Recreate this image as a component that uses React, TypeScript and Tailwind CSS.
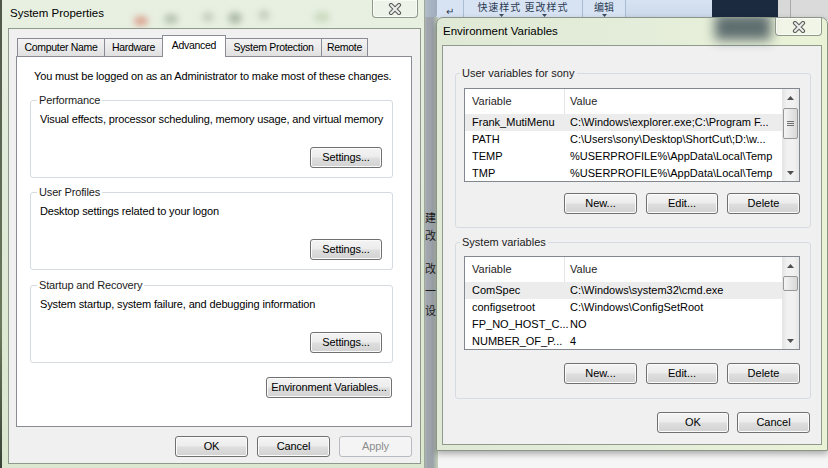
import React from "react";

const T = "text-[11px]";

function Btn({ label, w, disabled }: { label: string; w: string; disabled?: boolean }) {
  const style = disabled
    ? "border-[#b8bcc0] bg-[#f4f4f4] text-[#8d8d8d]"
    : "border-[#707070] bg-[linear-gradient(#f4f4f4,#ececec_48%,#dedede_52%,#d2d2d2)] text-black shadow-[inset_0_0_0_1px_#fbfbfb]";
  return (
    <div className={`flex h-[21px] items-center justify-center rounded-[3px] border leading-none ${T} ${style} ${w}`}>
      {label}
    </div>
  );
}

function Group({
  label,
  labelBg,
  labelLeft,
  className,
  children,
}: {
  label: string;
  labelBg: string;
  labelLeft: string;
  className: string;
  children: React.ReactNode;
}) {
  return (
    <div className={`relative rounded-[3px] border border-[#d5dbe0] ${className}`}>
      <span className={`absolute top-[-9px] px-[2px] leading-[16px] text-[#1b1b1b] ${T} ${labelBg} ${labelLeft}`}>
        {label}
      </span>
      {children}
    </div>
  );
}

function CloseX() {
  return (
    <svg width="14" height="12" viewBox="0 0 14 12">
      <path d="M3 2 L11 10 M11 2 L3 10" stroke="#5b5f5b" strokeWidth="4.2" strokeLinecap="round" />
      <path d="M3 2 L11 10 M11 2 L3 10" stroke="#eef0ee" strokeWidth="2" strokeLinecap="round" />
    </svg>
  );
}

function Caret() {
  return (
    <svg width="5" height="3" viewBox="0 0 5 3">
      <path d="M0 0 L2.5 3 L5 0 Z" fill="#3b4a60" />
    </svg>
  );
}

function ScrollBar({ thumb, grip }: { thumb: string; grip?: boolean }) {
  return (
    <div className="relative h-full w-[17px] shrink-0 bg-[linear-gradient(90deg,#e3e3e3,#f1f1f1_30%,#f1f1f1_70%,#e6e6e6)]">
      <div className="flex h-[17px] items-center justify-center">
        <svg width="7" height="4" viewBox="0 0 7 4">
          <path d="M0 4 L3.5 0 L7 4 Z" fill="#505050" />
        </svg>
      </div>
      <div
        className={`absolute left-[1px] right-[1px] flex items-center justify-center rounded-[2px] border border-[#979797] bg-[linear-gradient(90deg,#f4f4f4,#e6e6e6_50%,#d8d8d8)] ${thumb}`}
      >
        {grip && (
          <svg width="7" height="7" viewBox="0 0 7 7">
            <path d="M0 1.5 H7 M0 3.5 H7 M0 5.5 H7" stroke="#707070" strokeWidth="1" />
          </svg>
        )}
      </div>
      <div className="absolute bottom-0 flex h-[17px] w-full items-center justify-center">
        <svg width="7" height="4" viewBox="0 0 7 4">
          <path d="M0 0 L3.5 4 L7 0 Z" fill="#505050" />
        </svg>
      </div>
    </div>
  );
}

function ListView({ rows, thumb, grip }: { rows: [string, string][]; thumb: string; grip?: boolean }) {
  return (
    <div className="ml-[8px] flex h-[94px] w-[336px] overflow-hidden border border-[#828790] bg-white">
      <div className="min-w-0 flex-1">
        <div className={`flex h-[25px] items-center ${T} text-[#1e1e1e]`}>
          <div className="flex h-full w-[100px] items-center border-r border-[#e3e5e8] pl-[7px]">Variable</div>
          <div className="pl-[5px]">Value</div>
        </div>
        {rows.map((r, i) => (
          <div
            key={i}
            className={`flex h-[17px] items-center whitespace-nowrap ${T} ${i === 0 ? "bg-[#ececec]" : ""}`}
          >
            <div className="w-[100px] shrink-0 pl-[7px]">{r[0]}</div>
            <div className="pl-[5px]">{r[1]}</div>
          </div>
        ))}
      </div>
      <ScrollBar thumb={thumb} grip={grip} />
    </div>
  );
}

const tabs = [
  { label: "Computer Name", w: "w-[88px]" },
  { label: "Hardware", w: "w-[59px]" },
  { label: "Advanced", w: "w-[64px]", sel: true },
  { label: "System Protection", w: "w-[97px]" },
  { label: "Remote", w: "w-[47px]" },
];

function SystemProperties() {
  return (
    <div className="absolute left-[2px] top-0 h-[468px] w-[423px] border-r border-[#9ea99a] bg-[linear-gradient(180deg,#e8f0e2,#e0ead8_40%,#dbe7cf)]">
      <div className="relative h-[28px] overflow-hidden">
        <div className="absolute left-[132px] top-[16px] h-[10px] w-[14px] rounded-full bg-[#d88a78] opacity-70 blur-[3px]" />
        <div className="absolute left-[162px] top-[14px] h-[10px] w-[14px] rounded-full bg-[#9aa892] opacity-60 blur-[3px]" />
        <div className="absolute left-[200px] top-[12px] h-[10px] w-[12px] rounded-full bg-[#b4bca8] opacity-60 blur-[3px]" />
        <div className="absolute left-[226px] top-[12px] h-[12px] w-[14px] rounded-full bg-[#8e9e88] opacity-60 blur-[3px]" />
        <div className="absolute left-[256px] top-[10px] h-[10px] w-[12px] rounded-full bg-[#a6b29e] opacity-50 blur-[3px]" />
        <div className="absolute left-[312px] top-[12px] h-[10px] w-[16px] rounded-full bg-[#bccdab] opacity-60 blur-[3px]" />
        <div className="absolute left-[8px] top-[4px] text-[11.5px] leading-[18px]">System Properties</div>
        <div className="absolute left-[370px] top-0 flex h-[18px] w-[46px] items-center justify-center rounded-b-[4px] border border-t-0 border-[#8e998b] bg-[#f1f5ee]/60 shadow-[inset_0_0_0_1px_rgba(255,255,255,0.6)]">
          <CloseX />
        </div>
      </div>
      <div className="ml-[6px] h-[436px] w-[413px] border border-[#8f9a8c] bg-[#f0f0f0] tracking-[-0.15px]">
        <div className="relative z-10 mt-[6px] flex h-[21px] items-end pl-[8px]">
          {tabs.map((t, i) => (
            <div
              key={t.label}
              className={`flex items-center justify-center border border-b-0 border-[#898c95] text-[10.5px] tracking-[-0.3px] ${t.w} ${
                i > 0 ? "-ml-px" : ""
              } ${
                t.sel
                  ? "relative z-10 -mb-px h-[22px] bg-white pb-[1px]"
                  : "h-[18px] bg-[linear-gradient(#f3f3f3,#ebebeb_50%,#e0e0e0)]"
              }`}
            >
              {t.label}
            </div>
          ))}
        </div>
        <div className="ml-[7px] h-[371px] w-[396px] border border-[#898c95] bg-white">
          <div className={`pl-[17px] pt-[11px] leading-[16px] ${T}`}>
            You must be logged on as an Administrator to make most of these changes.
          </div>
          {[
            { l: "Performance", d: "Visual effects, processor scheduling, memory usage, and virtual memory", mt: "mt-[16px]" },
            { l: "User Profiles", d: "Desktop settings related to your logon", mt: "mt-[14px]" },
            { l: "Startup and Recovery", d: "System startup, system failure, and debugging information", mt: "mt-[15px]" },
          ].map((g) => (
            <Group
              key={g.l}
              label={g.l}
              labelBg="bg-white"
              labelLeft="left-[6px]"
              className={`ml-[13px] h-[78px] w-[363px] ${g.mt}`}
            >
              <div className={`pl-[9px] pt-[10px] leading-[16px] ${T}`}>{g.d}</div>
              <div className="mt-[20px] flex justify-end pr-[10px]">
                <Btn label="Settings..." w="w-[72px]" />
              </div>
            </Group>
          ))}
          <div className="mt-[14px] flex justify-end pr-[19px]">
            <Btn label="Environment Variables..." w="w-[126px]" />
          </div>
        </div>
        <div className="mt-[9px] flex justify-end gap-[9px] pr-[8px]">
          <Btn label="OK" w="w-[73px]" />
          <Btn label="Cancel" w="w-[73px]" />
          <Btn label="Apply" w="w-[73px]" disabled />
        </div>
      </div>
    </div>
  );
}

function EnvVars() {
  const userRows: [string, string][] = [
    ["Frank_MutiMenu", "C:\\Windows\\explorer.exe;C:\\Program F..."],
    ["PATH", "C:\\Users\\sony\\Desktop\\ShortCut\\;D:\\w..."],
    ["TEMP", "%USERPROFILE%\\AppData\\Local\\Temp"],
    ["TMP", "%USERPROFILE%\\AppData\\Local\\Temp"],
  ];
  const sysRows: [string, string][] = [
    ["ComSpec", "C:\\Windows\\system32\\cmd.exe"],
    ["configsetroot", "C:\\Windows\\ConfigSetRoot"],
    ["FP_NO_HOST_C...", "NO"],
    ["NUMBER_OF_P...", "4"],
  ];
  return (
    <div className="absolute left-[436px] top-[17px] h-[434px] w-[392px] overflow-hidden rounded-t-[7px] border border-[#8a9588] bg-[linear-gradient(90deg,#dfe9d5,#e4edda_50%,#eaf2d6)] shadow-[0_3px_6px_rgba(0,0,0,0.3)]">
      <div className="relative h-[27px]">
        <div className="absolute left-[278px] top-[-4px] h-[26px] w-[56px] bg-[#3c4d55] opacity-80 blur-[6px]" />
        <div className="absolute left-[6px] top-[4px] text-[11.5px] leading-[18px]">Environment Variables</div>
        <div className="absolute left-[338px] top-0 flex h-[18px] w-[47px] items-center justify-center rounded-b-[4px] border border-t-0 border-[#8e998b] bg-[#f3f6ee]/70 shadow-[inset_0_0_0_1px_rgba(255,255,255,0.6)]">
          <CloseX />
        </div>
      </div>
      <div className="ml-[5px] h-[400px] w-[380px] border border-[#8f9a8c] bg-[#f0f0f0]">
        <Group
          label="User variables for sony"
          labelBg="bg-[#f0f0f0]"
          labelLeft="left-[4px]"
          className="ml-[12px] mt-[27px] h-[155px] w-[356px]"
        >
          <div className="mt-[14px]">
            <ListView rows={userRows} thumb="top-[19px] h-[31px]" grip />
          </div>
          <div className="mt-[11px] flex justify-end gap-[9px] pr-[10px]">
            <Btn label="New..." w="w-[73px]" />
            <Btn label="Edit..." w="w-[72px]" />
            <Btn label="Delete" w="w-[73px]" />
          </div>
        </Group>
        <Group
          label="System variables"
          labelBg="bg-[#f0f0f0]"
          labelLeft="left-[4px]"
          className="ml-[12px] mt-[14px] h-[157px] w-[356px]"
        >
          <div className="mt-[13px]">
            <ListView rows={sysRows} thumb="top-[19px] h-[15px]" />
          </div>
          <div className="mt-[13px] flex justify-end gap-[9px] pr-[10px]">
            <Btn label="New..." w="w-[73px]" />
            <Btn label="Edit..." w="w-[72px]" />
            <Btn label="Delete" w="w-[73px]" />
          </div>
        </Group>
        <div className="mt-[13px] flex justify-end gap-[8px] pr-[11px]">
          <Btn label="OK" w="w-[72px]" />
          <Btn label="Cancel" w="w-[73px]" />
        </div>
      </div>
    </div>
  );
}

function Backdrop() {
  return (
    <>
      <div className="absolute left-0 top-0 h-full w-[3px] bg-[linear-gradient(180deg,#4e574a,#6b7a5c_70%,#3a4236)]" />
      <div className="absolute left-[420px] top-0 flex h-[20px] w-[408px] bg-[#d7e3f2] font-['Noto_Sans_CJK_SC',sans-serif] text-[#2b3b52]">
        <div className="h-full w-[17px] rounded-br-[6px] bg-[linear-gradient(90deg,#b9c3cf,#9eabbb)]" />
        <div className="flex w-[26px] items-start justify-center pt-[6px] text-[10px] leading-[10px]">↵</div>
        <div className="flex w-[119px] flex-col items-center border-l border-[#a8bcd6] pt-[1px]">
          <div className="text-[10px] leading-[11px] tracking-[1px]">快速样式 更改样式</div>
          <div className="mt-[2px] flex w-full justify-around px-[16px]">
            <Caret />
            <Caret />
          </div>
        </div>
        <div className="flex w-[43px] flex-col items-center border-l border-[#a8bcd6] pt-[1px]">
          <div className="text-[10px] leading-[11px]">编辑</div>
          <div className="mt-[2px] flex">
            <Caret />
          </div>
        </div>
        <div className="flex-1 border-l border-[#a8bcd6] bg-[linear-gradient(#d7e3f2,#c8d7ea)]" />
        <div className="w-[66px] bg-[#1c2a40]" />
        <div className="w-[12px] bg-[#d8d8d8]" />
        <div className="w-[38px] border-l border-[#a9a9a9] bg-[#dadada]" />
      </div>
      <div className="absolute left-[420px] top-[17px] h-[451px] w-[18px] overflow-hidden bg-[linear-gradient(90deg,#c7ccd2,#a1a6ad_40%,#9ca2a9_70%,#c3d0b8)] font-['Noto_Sans_CJK_SC',sans-serif] text-[11px] leading-none text-[#1d1d1d]">
        <span className="absolute left-[5px] top-[195px]">建</span>
        <span className="absolute left-[5px] top-[213px]">改</span>
        <span className="absolute left-[5px] top-[246px]">改</span>
        <span className="absolute left-[5px] top-[268px]">一</span>
        <span className="absolute left-[5px] top-[288px]">设</span>
      </div>
    </>
  );
}

export default function App() {
  return (
    <div className="relative h-[468px] w-[828px] overflow-hidden whitespace-nowrap bg-[#f5f5f5] font-['Liberation_Sans',Arial,sans-serif] text-black">
      <Backdrop />
      <SystemProperties />
      <EnvVars />
    </div>
  );
}
